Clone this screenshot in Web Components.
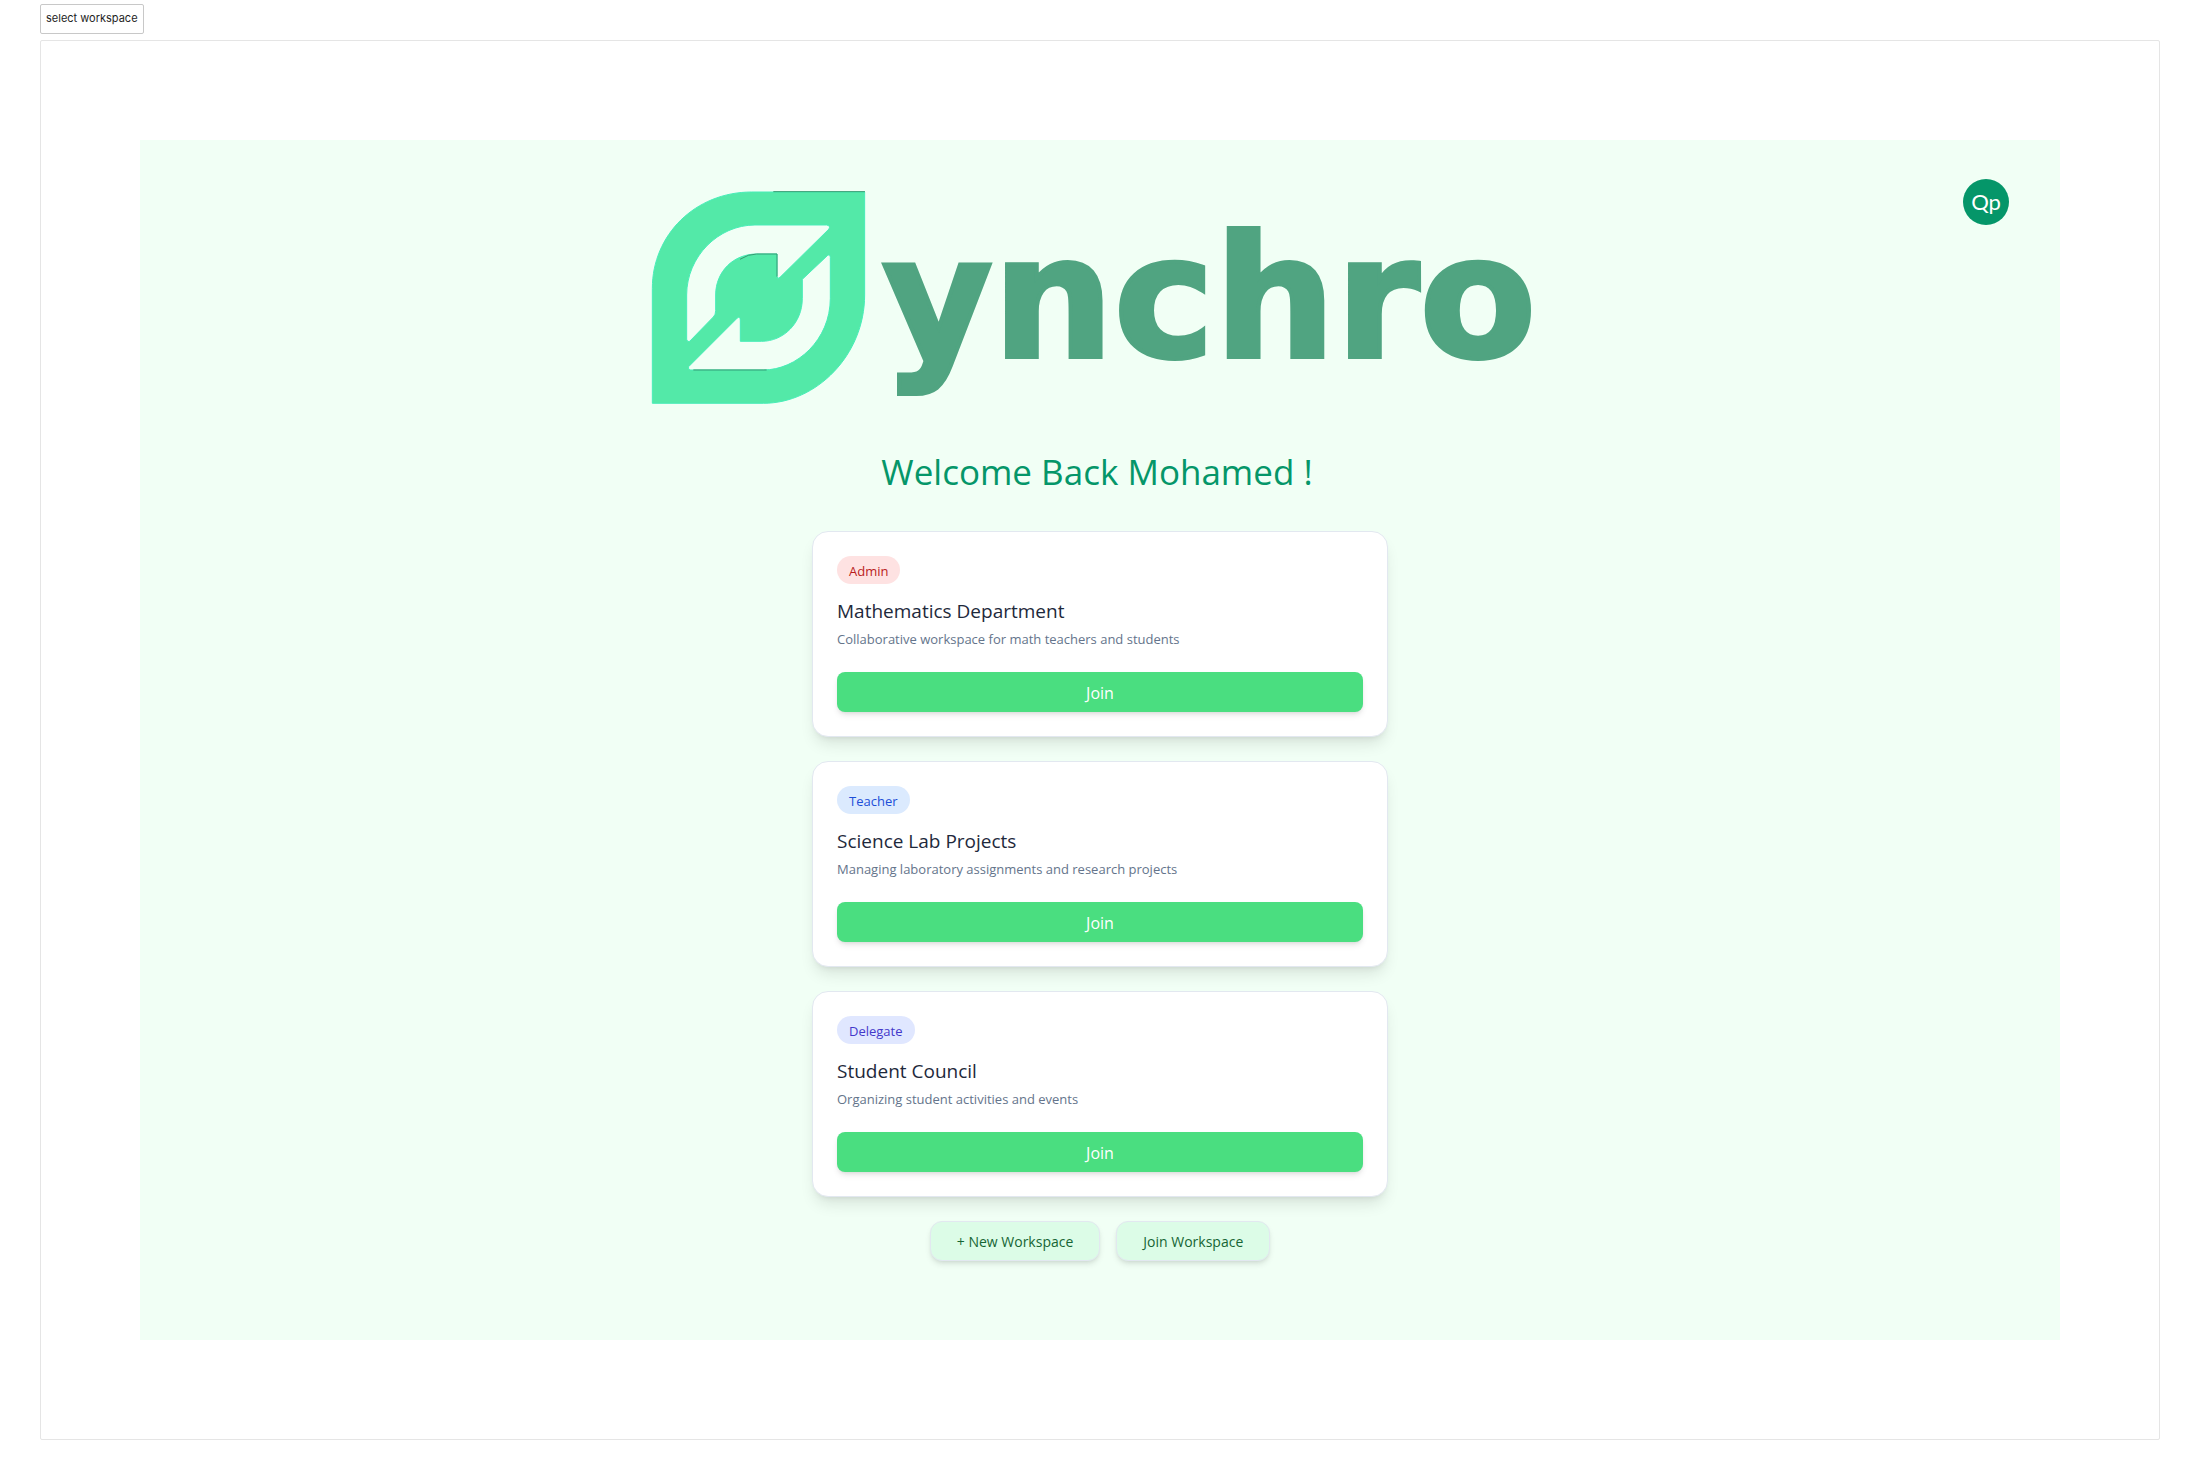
<!DOCTYPE html>
<html lang="en">
<head>
<meta charset="utf-8">
<title>Synchro – select workspace</title>
<style>
  body { margin: 0; background: #fff; font-family: "Open Sans", "Noto Sans", sans-serif; }
</style>
</head>
<body>
<app-frame label="select workspace">
  <workspace-page>
    <synchro-logo slot="logo"></synchro-logo>
    <user-avatar slot="user">Qp</user-avatar>
    <span slot="greeting">Welcome Back Mohamed !</span>
    <workspace-card role-name="admin">
      <span slot="role">Admin</span>
      <span slot="name">Mathematics Department</span>
      <span slot="about">Collaborative workspace for math teachers and students</span>
    </workspace-card>
    <workspace-card role-name="teacher">
      <span slot="role">Teacher</span>
      <span slot="name">Science Lab Projects</span>
      <span slot="about">Managing laboratory assignments and research projects</span>
    </workspace-card>
    <workspace-card role-name="delegate">
      <span slot="role">Delegate</span>
      <span slot="name">Student Council</span>
      <span slot="about">Organizing student activities and events</span>
    </workspace-card>
    <soft-button slot="actions">+ New Workspace</soft-button>
    <soft-button slot="actions">Join Workspace</soft-button>
  </workspace-page>
</app-frame>

<script>
const define = (name, html) => {
  const template = document.createElement('template');
  template.innerHTML = html;
  customElements.define(name, class extends HTMLElement {
    constructor() {
      super();
      this.attachShadow({ mode: 'open' }).append(template.content.cloneNode(true));
    }
    connectedCallback() {
      const label = this.shadowRoot.querySelector('[data-label]');
      if (label) label.textContent = this.getAttribute('label');
    }
  });
};

define('app-frame', `
<style>
  :host { display: flex; flex-direction: column; align-items: flex-start; gap: 6px; padding: 4px 40px 40px; }
  .tag { box-sizing: border-box; height: 30px; padding: 0 5px; border: 1px solid #c8c8c8; border-radius: 2px;
         font: 11px/27px Inter, sans-serif; color: #1e1e1e; background: #fff; }
  .frame { box-sizing: border-box; align-self: stretch; padding: 99px; border: 1px solid #e5e5e5; border-radius: 2px; background: #fff; }
</style>
<div class="tag" data-label></div>
<div class="frame"><slot></slot></div>`);

define('workspace-page', `
<style>
  :host { display: flex; flex-direction: column; align-items: center; padding: 39px 51px 79px; background: #f1fff5; }
  header { align-self: stretch; display: grid; grid-template-columns: 1fr auto 1fr; align-items: start; }
  .logo { grid-column: 2; padding: 12px 16px 0 0; }
  .user { justify-self: end; }
  h1 { margin: 40px 0 32px; padding-right: 6px; font-size: 35px; line-height: 54px; font-weight: 400; color: #059669; }
  .list { width: 576px; max-width: 100%; display: flex; flex-direction: column; gap: 24px; }
  .actions { display: flex; gap: 16px; margin-top: 24px; }
</style>
<header>
  <div class="logo"><slot name="logo"></slot></div>
  <div class="user"><slot name="user"></slot></div>
</header>
<h1><slot name="greeting"></slot></h1>
<main class="list"><slot></slot></main>
<div class="actions"><slot name="actions"></slot></div>`);

define('synchro-logo', `
<style>
  :host { display: block; }
  svg { display: block; width: 880px; overflow: visible; }
  text { font-family: "DejaVu Sans", sans-serif; font-weight: 700; font-size: 170px; fill: #50a481; stroke: #50a481; stroke-width: 4px; }
</style>
<svg viewBox="0 0 880 214" role="img" aria-label="Synchro">
  <g transform="scale(.3333) translate(-36 -33)">
    <path fill="#53e9a8" stroke="#48edb8" stroke-width="3" fill-rule="evenodd" d="M37 670V325C37 165 165 36 335 36H674V345C674 525 530 670 370 670Z
      M140 478V345C140 230 235 135 345 135H560Q572 137 567 147L420 292Q413 299 411 290V222H350C280 222 227 275 227 345V392Q227 405 220 411L149 484Q142 488 140 478Z
      M571 232V355C571 480 470 570 370 570H152Q142 568 146 560L292 414Q300 408 301 420V484H365C430 484 487 430 487 355V298L562 227Q570 221 571 232Z"/>
    <path fill="none" stroke="#36996f" stroke-width="3" d="M400 35H675M300 238Q325 222 350 222H411V290M160 570H380"/>
  </g>
  <text x="230" y="166">ynchro</text>
</svg>`);

define('user-avatar', `
<style>
  :host { display: block; }
  button { display: block; width: 46px; height: 46px; padding: 0; border: 0; border-radius: 50%; background: #059669;
           color: #fff; font: 400 22px/44px Lato, sans-serif; text-align: center; }
</style>
<button type="button" aria-label="Account"><slot></slot></button>`);

define('workspace-card', `
<style>
  :host { box-sizing: border-box; display: flex; flex-direction: column; align-items: flex-start; padding: 24px;
          border: 1px solid #e2e8f0; border-radius: 16px; background: #fff;
          box-shadow: 0 10px 15px -3px rgba(0,0,0,.1), 0 4px 6px -4px rgba(0,0,0,.1); }
  .role { padding: 2px 12px 0; border-radius: 14px; font-size: 13px; line-height: 26px; background: #fee2e2; color: #b91c1c; }
  :host([role-name="teacher"]) .role { background: #dbeafe; color: #1d4ed8; }
  :host([role-name="delegate"]) .role { background: #e0e7ff; color: #4338ca; }
  h2 { margin: 13px 0 4px; font-size: 19px; line-height: 28px; font-weight: 400; color: #1e293b; }
  p { margin: 0 0 23px; font-size: 13px; line-height: 20px; color: #64748b; }
  button { align-self: stretch; height: 40px; padding: 2px 0 0; border: 0; border-radius: 8px; background: #4ade80; color: #fff;
           font-family: inherit; font-size: 16px;
           box-shadow: 0 4px 6px -1px rgba(0,0,0,.1), 0 2px 4px -2px rgba(0,0,0,.1); }
</style>
<div class="role"><slot name="role"></slot></div>
<h2><slot name="name"></slot></h2>
<p><slot name="about"></slot></p>
<button type="button">Join</button>`);

define('soft-button', `
<style>
  :host { display: block; }
  button { height: 40px; padding: 1px 26px 0; border: 1px solid #e2e8f0; border-radius: 12px; background: #dcfce7; color: #166534;
           font-family: inherit; font-size: 14px;
           box-shadow: 0 4px 6px -1px rgba(0,0,0,.1), 0 2px 4px -2px rgba(0,0,0,.1); }
</style>
<button type="button"><slot></slot></button>`);
</script>
</body>
</html>
